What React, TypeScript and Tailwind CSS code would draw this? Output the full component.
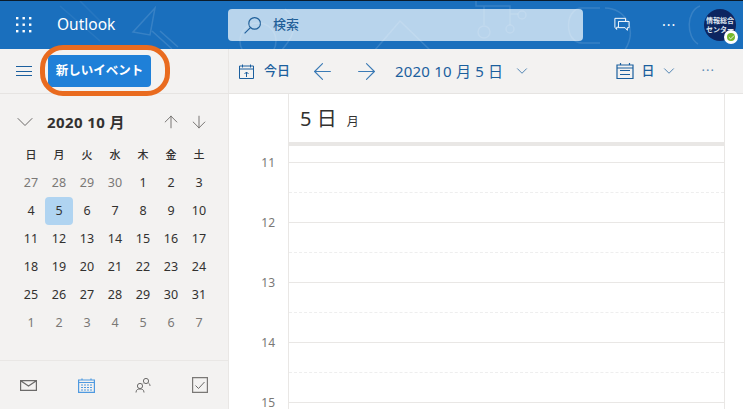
import { ChevronDown, ArrowLeft, ArrowRight, ArrowUp, ArrowDown, Check } from 'lucide-react'

const font = "font-['Noto_Sans','Noto_Sans_CJK_JP',sans-serif]"

const weekdays = ['日', '月', '火', '水', '木', '金', '土']
const days = [
  27, 28, 29, 30, 1, 2, 3,
  4, 5, 6, 7, 8, 9, 10,
  11, 12, 13, 14, 15, 16, 17,
  18, 19, 20, 21, 22, 23, 24,
  25, 26, 27, 28, 29, 30, 31,
  1, 2, 3, 4, 5, 6, 7,
]
const hours = [11, 12, 13, 14, 15]

function Waffle() {
  const dots = []
  for (let y = 0; y < 3; y++) {
    for (let x = 0; x < 3; x++) {
      dots.push(<rect key={`${x}${y}`} x={x * 6.5} y={y * 6.5} width="2.4" height="2.4" fill="#fff" />)
    }
  }
  return <svg width="16" height="16" viewBox="0 0 16 16">{dots}</svg>
}

function HeaderArt() {
  return (
    <svg className="pointer-events-none absolute left-0 top-0" width="743" height="49" viewBox="0 0 743 49" fill="none" stroke="#fff" strokeOpacity="0.13" strokeWidth="1.5">
      <path d="M155 7 L133 31 L150 34 Z M152 30 L172 48 M160 30 L178 46" />
      <path d="M80 0 L110 30 M60 5 L100 40" strokeOpacity="0.06" />
      <circle cx="258" cy="40" r="18" />
      <path d="M285 8 C 298 18 298 30 282 49" />
      <path d="M375 49 L400 20 L430 49" />
      <path d="M476 0 V5 H510 V24 M484 5 V24 M510 13 H518" />
      <circle cx="484" cy="31" r="6" />
      <circle cx="510" cy="28" r="4" />
      <circle cx="522" cy="14" r="4" />
      <path d="M600 7 H582 C 564 7 564 42 582 42 H600 M605 7 C 625 7 638 28 625 49" />
      <path d="M700 5 C 686 10 686 36 698 43" />
    </svg>
  )
}

function TodayIcon() {
  return (
    <svg width="15" height="15" viewBox="0 0 15 15" fill="none" stroke="#1b5f9e" strokeWidth="1">
      <path d="M.5 2 H14.5 V14.5 H.5 Z M.5 5 H14.5 M3.5 .5 V3.5 M11.5 .5 V3.5" />
      <path d="M7.5 13 V8 M5.5 10 L7.5 8 L9.5 10" />
    </svg>
  )
}

function DayViewIcon() {
  return (
    <svg width="18" height="18" viewBox="0 0 18 18" fill="none" stroke="#1b5f9e" strokeWidth="1.2">
      <path d="M1 3 H17 V16.5 H1 Z M1 6 H17 M4 8.5 H14 M4 12.5 H14 M4.5 1 V3 M13.5 1 V3" />
    </svg>
  )
}

function App() {
  return (
    <main className={`relative flex h-[409px] w-[743px] flex-col overflow-hidden bg-white ${font}`}>
      {/* Top bar */}
      <header className="relative flex h-[49px] shrink-0 items-center border-t border-[#0b1b2b] bg-[#1a6fbd] text-white">
        <div className="ml-4 flex w-[41px] items-center">
          <Waffle />
        </div>
        <span className="w-[171px] text-[15.5px] leading-none">Outlook</span>
        <div className="flex h-8 w-[355px] items-center rounded-sm bg-[#b8d4ec] pl-[15px] text-[#1f5f99]">
          <svg width="19" height="19" viewBox="0 0 18 18" fill="none" stroke="#1f5f99" strokeWidth="1.1">
            <circle cx="11" cy="7" r="5.5" />
            <path d="M7 11 L1.5 16.5" />
          </svg>
          <span className="ml-[11px] text-[13px] font-medium">検索</span>
        </div>
        <div className="ml-[31px] flex w-[16px] justify-center">
          <svg width="18" height="18" viewBox="0 0 18 18" fill="none" stroke="#fff" strokeWidth="1.1">
            <path d="M1 1.5 H13 V4.5 M5 11.5 H3 V14 L1 11.5 V1.5" />
            <path d="M5 5 H17 V12 H15 V15 L12.5 12 H5 Z" />
          </svg>
        </div>
        <span className="ml-[32px] text-[14px] leading-none tracking-[1px]">···</span>
        <div className="relative ml-auto mr-[7px] flex h-8 w-8 flex-col items-center justify-center rounded-full bg-[#0d2560] text-[7px] font-bold leading-[9px] text-[#dfe6f0]">
          <span>情報総合</span>
          <span>センター</span>
          <span className="absolute -bottom-[3px] -right-[2px] flex h-[14px] w-[14px] items-center justify-center rounded-full border-[3px] border-white bg-[#76b82a]">
            <Check className="h-[7px] w-[7px] text-white" strokeWidth={3} />
          </span>
        </div>
        <HeaderArt />
      </header>

      {/* Command bar */}
      <div className="flex h-[45px] shrink-0 border-b border-[#e6e4e2] bg-[#f3f2f1] text-[#1b5f9e]">
        <div className="flex w-[229px] shrink-0 items-center border-r border-[#e9e7e5] pl-4">
          <svg width="16" height="12" viewBox="0 0 16 12" stroke="#1b5f9e" strokeWidth="1">
            <path d="M0 1.5 H16 M0 6.5 H16 M0 10.5 H16" />
          </svg>
          <button className="ml-4 flex h-8 w-[103px] items-center justify-center rounded-sm bg-[#1f80d8] text-[12.5px] font-bold text-white">
            新しいイベント
          </button>
        </div>
        <div className="flex flex-1 items-center pl-[10px] text-[13px]">
          <TodayIcon />
          <span className="ml-[10px] font-medium">今日</span>
          <ArrowLeft className="ml-[19px] h-[27px] w-[27px] text-[#3a7ab5]" strokeWidth={1} />
          <ArrowRight className="ml-[17px] h-[27px] w-[27px] text-[#3a7ab5]" strokeWidth={1} />
          <span className="ml-[15px] text-[15px] tracking-[0.2px]">2020 10 月 5 日</span>
          <ChevronDown className="ml-[10px] h-[18px] w-[18px]" strokeWidth={1} />
          <div className="ml-auto"><DayViewIcon /></div>
          <span className="ml-2 font-medium">日</span>
          <ChevronDown className="ml-[5px] h-[18px] w-[18px]" strokeWidth={1} />
          <span className="ml-[24px] mr-[28px] tracking-[1px] text-[#5c8ab5]">···</span>
        </div>
      </div>

      <div className="flex min-h-0 flex-1">
        {/* Sidebar */}
        <aside className="flex w-[229px] shrink-0 flex-col border-r border-[#e9e7e5] bg-[#f3f2f1]">
          <div className="flex flex-1 flex-col pl-[17px] pt-4">
            <div className="flex h-[24px] w-[196px] items-center text-[#323130]">
              <ChevronDown className="-ml-[6px] h-[28px] w-[28px] text-[#605e5c]" strokeWidth={0.8} />
              <span className="ml-2 text-[15px] font-bold tracking-[0.4px]">2020 10 月</span>
              <ArrowUp className="ml-auto h-[20px] w-[20px] text-[#605e5c]" strokeWidth={1} />
              <ArrowDown className="ml-2 mr-1 h-[20px] w-[20px] text-[#605e5c]" strokeWidth={1} />
            </div>
            <div className="mt-[7px] grid w-[196px] grid-cols-7 text-[12.5px]">
              {weekdays.map((d) => (
                <div key={d} className="flex h-[28px] items-center justify-center text-[11px] font-medium text-[#323130]">{d}</div>
              ))}
              {days.map((d, i) => (
                <div
                  key={i}
                  className={`flex h-[28px] items-center justify-center rounded-sm ${i === 8 ? 'bg-[#b0d4f1]' : ''} ${i < 4 || i >= 35 ? 'text-[#7a7876]' : 'text-[#323130]'}`}
                >
                  {d}
                </div>
              ))}
            </div>
          </div>
          <nav className="flex h-[49px] shrink-0 items-center justify-around border-t border-[#e9e7e5]">
            <svg width="17" height="11" viewBox="0 0 17 11" fill="none" stroke="#6b6a69" strokeWidth="1.2">
              <path d="M.6.6 H16.4 V10.4 H.6 Z M1 1 L8.5 6 L16 1" />
            </svg>
            <svg width="17" height="15" viewBox="0 0 17 15" fill="none" stroke="#4f9ae0" strokeWidth="1.2">
              <path d="M.6 2 H16.4 V14.4 H.6 Z M.6 4.5 H16.4 M4 .5 V2 M13 .5 V2" />
              <path d="M3 7 H14 M3 9.5 H14 M3 12 H14" strokeDasharray="2 1" />
            </svg>
            <svg width="16" height="16" viewBox="0 0 16 16" fill="none" stroke="#6b6a69" strokeWidth="1">
              <circle cx="5" cy="9" r="2.6" />
              <circle cx="11" cy="4" r="2.6" />
              <path d="M1 15.5 C1 12.5 3 12 5 12 C7 12 9 12.5 9 15.5 M13.5 6 C14.5 6.5 15 8 15 9 M8 6.5 L7.5 7" />
            </svg>
            <svg width="16" height="16" viewBox="0 0 16 16" fill="none" stroke="#7a7876" strokeWidth="1.2">
              <path d="M.6.6 H15.4 V15.4 H.6 Z" />
              <path d="M3.5 8.5 L6.5 11.5 L12.5 5" stroke="#6b6a69" strokeWidth="1" />
            </svg>
          </nav>
        </aside>

        {/* Day view */}
        <section className="flex min-w-0 flex-1 flex-col overflow-hidden pr-[18px]">
          <div className="ml-[59px] flex h-[52px] shrink-0 items-center border-x border-b-[4px] border-[#e9e7e5] pl-[11px] text-[#323130]">
            <span className="mt-[2px] text-[20px]">5 日</span>
            <span className="ml-[10px] mt-[7px] text-[12px]">月</span>
          </div>
          {hours.map((h) => (
            <div key={h} className="flex h-[60px] shrink-0">
              <div className="flex w-[59px] shrink-0 justify-end pr-[13px] pt-[11px] text-[12px] leading-none text-[#7a7876]">{h}</div>
              <div className="flex-1 border-x border-[#e9e7e5]">
                <div className="mt-[16px] h-[31px] border-y border-t-[#e9e7e5] border-b-[#eeeeee] [border-bottom-style:dashed]" />
              </div>
            </div>
          ))}
        </section>
      </div>

      {/* Orange annotation */}
      <div className="absolute left-[40px] top-[45px] h-[51px] w-[130px] rounded-[23px] border-[5px] border-[#e96b1f]" />
    </main>
  )
}

export default App
